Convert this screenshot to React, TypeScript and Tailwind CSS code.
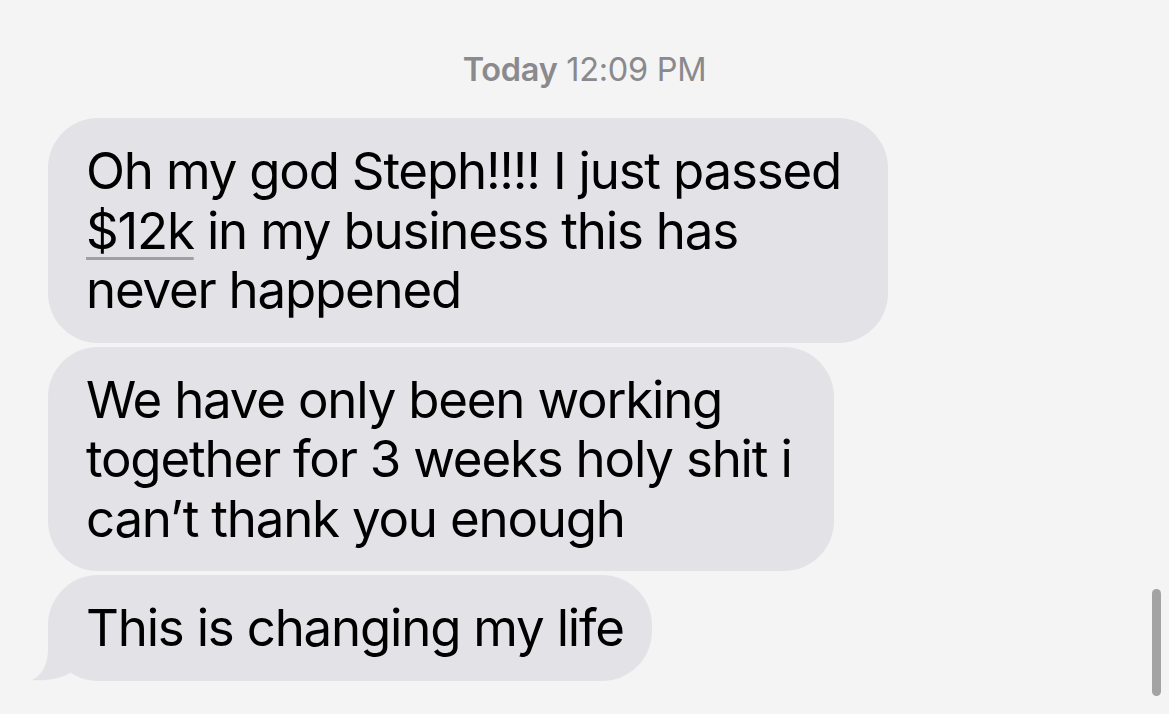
const font = { fontFamily: 'Inter, "Liberation Sans", sans-serif' };

function Bubble({ width, children, tail }: { width: string; children: React.ReactNode; tail?: boolean }) {
  return (
    <div className={`relative ${width}`}>
      <div className="whitespace-nowrap rounded-[50px] bg-[#e3e3e7] py-[23px] pl-[38px] pr-6 text-[51px] leading-[59.5px] tracking-[-1.2px] text-black">
        {children}
      </div>
      {tail && (
        <svg
          className="absolute -left-[24px] bottom-0"
          width="60"
          height="50"
          viewBox="0 0 60 50"
          aria-hidden="true"
        >
          <path d="M24 0 L46 0 L46 42 C36 48 22 50 8 49 C18 44 24 34 24 18 Z" fill="#e3e3e7" />
        </svg>
      )}
    </div>
  );
}

export default function App() {
  return (
    <div className="relative h-[714px] w-[1169px] overflow-hidden bg-[#f4f4f4]" style={font}>
      <div className="pt-[50px] text-center text-[32.5px] leading-[40px] tracking-[-0.3px] text-[#8a8a8e]">
        <span className="font-semibold">Today</span> 12:09 PM
      </div>
      <div className="mt-[28px] flex flex-col gap-[4px] pl-[48px]">
        <Bubble width="w-[840px]">
          Oh my god Steph!!!! I just passed
          <br />
          <span className="underline decoration-[#a0a0a0] decoration-[3px] underline-offset-[8px]">$12k</span> in my
          business this has
          <br />
          never happened
        </Bubble>
        <Bubble width="w-[786px]">
          We have only been working
          <br />
          together for 3 weeks holy shit i
          <br />
          can’t thank you enough
        </Bubble>
        <Bubble width="w-[604px]" tail>
          This is changing my life
        </Bubble>
      </div>
      <div className="absolute right-[8px] top-[589px] h-[107px] w-[9px] rounded-full bg-[#a3a3a3]" />
    </div>
  );
}
